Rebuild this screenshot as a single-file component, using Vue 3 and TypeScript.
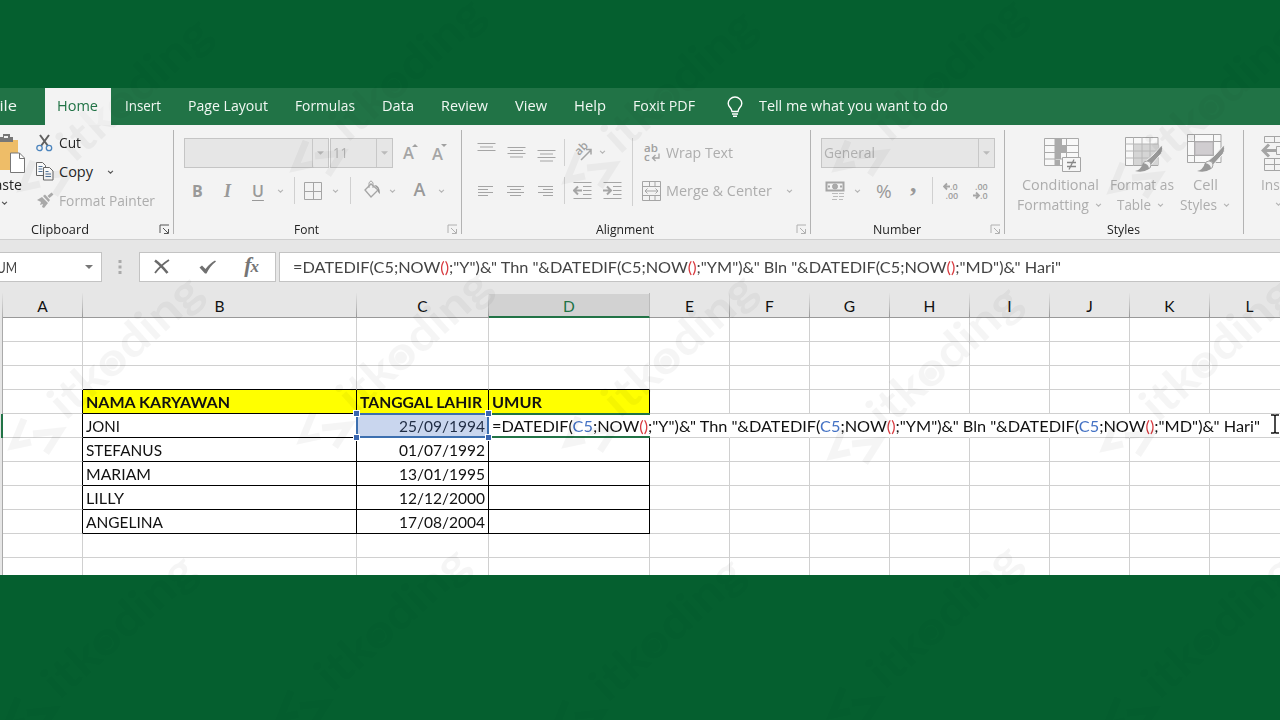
<script setup lang="ts">
import type { Directive } from 'vue'

// Condenses or stretches a label so that it fills the given width.
const vFit: Directive<HTMLElement, number> = {
  mounted(el, binding) {
    const natural = el.getBoundingClientRect().width
    el.style.transform = `scaleX(${binding.value / natural})`
    el.style.width = `${binding.value}px`
  },
}

const tabs = [
  { label: 'Insert', w: 36 },
  { label: 'Page Layout', w: 80 },
  { label: 'Formulas', w: 60 },
  { label: 'Data', w: 32 },
  { label: 'Review', w: 47 },
  { label: 'View', w: 32 },
  { label: 'Help', w: 32 },
  { label: 'Foxit PDF', w: 62 },
]

const columns = ['A', 'B', 'C', 'D', 'E', 'F', 'G', 'H', 'I', 'J', 'K', 'L']

interface Entry { text: string; w: number }
const table: Record<number, Record<string, Entry>> = {
  4: { B: { text: 'NAMA KARYAWAN', w: 144 }, C: { text: 'TANGGAL LAHIR', w: 122 }, D: { text: 'UMUR', w: 50 } },
  5: { B: { text: 'JONI', w: 34 }, C: { text: '25/09/1994', w: 86 } },
  6: { B: { text: 'STEFANUS', w: 76 }, C: { text: '01/07/1992', w: 86 } },
  7: { B: { text: 'MARIAM', w: 65 }, C: { text: '13/01/1995', w: 86 } },
  8: { B: { text: 'LILLY', w: 38 }, C: { text: '12/12/2000', w: 86 } },
  9: { B: { text: 'ANGELINA', w: 77 }, C: { text: '17/08/2004', w: 86 } },
}
const rows = [1, 2, 3, 4, 5, 6, 7, 8, 9, 10, 11]

const cellClass = (r: number, c: string) => ({
  ['c' + c]: true,
  head: r === 4 && 'BCD'.includes(c),
  lineRight: r >= 4 && r <= 9 && 'ABCD'.includes(c) && !(r === 5 && c === 'D'),
  lineBottom: r >= 3 && r <= 9 && 'BCD'.includes(c),
  spill: r === 5 && c > 'C',
})

const formula = [
  { t: '=DATEDIF(' }, { t: 'C5', k: 'ref' }, { t: ';NOW' }, { t: '()', k: 'par' },
  { t: ';"Y")&" Thn "&DATEDIF(' }, { t: 'C5', k: 'ref' }, { t: ';NOW' }, { t: '()', k: 'par' },
  { t: ';"YM")&" Bln "&DATEDIF(' }, { t: 'C5', k: 'ref' }, { t: ';NOW' }, { t: '()', k: 'par' },
  { t: ';"MD")&" Hari"' },
]

const marks = [
  [45, 178], [318, 158], [590, 170], [860, 158], [1135, 180],
  [36, 436], [325, 430], [590, 434], [855, 446], [1128, 438],
  [30, 715], [303, 708], [578, 718], [855, 705], [1130, 715],
]
</script>

<template>
  <div class="page">
    <div class="band top"></div>

    <nav class="menu">
      <div class="file"><span v-fit="26">File</span></div>
      <div class="home"><span v-fit="41">Home</span></div>
      <div class="tabs"><span v-for="t in tabs" :key="t.label" v-fit="t.w">{{ t.label }}</span></div>
      <svg class="bulb" width="18" height="22" viewBox="0 0 18 22" fill="none" stroke="#fff" stroke-width="1.4">
        <path d="M6 15.5C6 12 2.2 11 2.2 7.5a6.8 6.5 0 0 1 13.6 0C15.8 11 12 12 12 15.5Z" />
        <path d="M6 18h6M7 20.3h4" />
      </svg>
      <span v-fit="189">Tell me what you want to do</span>
    </nav>

    <div class="ribbon">
      <section class="group clip">
        <div class="body">
          <div class="paste">
            <svg width="26" height="40" viewBox="0 0 26 40">
              <path d="M0 7h18v30H0z" fill="#eebd68" />
              <path d="M0 4h3V1h7v3h3v5H0z" fill="#777" /><path d="M4 3h4v2H4z" fill="#f3f3f3" />
              <path d="M10.500 20h9l5 5v14.500h-14z" fill="#fff" stroke="#777" />
              <path d="M19.500 20v5.500h5" fill="none" stroke="#777" />
            </svg>
            <span class="pasteText"><span v-fit="36">Paste</span></span>
            <svg class="chev dark" viewBox="0 0 8 5"><path d="M1 1l3 3 3-3" /></svg>
          </div>
          <div class="clipRows">
            <div class="line">
              <svg width="18" height="18" viewBox="0 0 18 18" fill="none">
                <path d="M4 1l8 11M13 1L5 12" stroke="#606060" stroke-width="2" />
                <circle cx="3.500" cy="14" r="2.700" stroke="#4b84bd" stroke-width="1.300" /><circle cx="13" cy="14" r="2.700" stroke="#4b84bd" stroke-width="1.300" />
              </svg>
              <span v-fit="22">Cut</span>
            </div>
            <div class="line">
              <svg width="18" height="19" viewBox="0 0 18 19" fill="#fafafa" stroke="#666">
                <path d="M.5.5h6l3 3v10h-9z" /><path d="M2.500 4.500h4M2.500 7h4M2.500 9.500h4" stroke="#4f7196" />
                <path d="M7.500 5.500h6l3.500 3.500v9H7.500z" /><path d="M9.500 9.500h3M9.500 12h5.500M9.500 14.500h5.500" stroke="#4f7196" />
              </svg>
              <span v-fit="34">Copy</span>
              <svg class="chev dark wide" viewBox="0 0 8 5"><path d="M1 1l3 3 3-3" /></svg>
            </div>
            <div class="line off">
              <svg width="18" height="17" viewBox="0 0 18 17" fill="#a9a9a9">
                <path d="M1 8l5-3 6 6-4 5-2-1 1-3-3 1 1-3z" /><path d="M7 4l2-1.500 5 5.500-1.500 2z" /><path d="M11.500 4l4-3.500 2 2-4 3.500z" />
              </svg>
              <span v-fit="96">Format Painter</span>
            </div>
          </div>
        </div>
        <footer><b v-fit="58">Clipboard</b><svg class="launch dark" viewBox="0 0 11 10"><path d="M1 9V1h9M4 4l5 5M9.500 5v4.500H5" /></svg></footer>
      </section>

      <section class="group font">
        <div class="body">
          <div class="r1">
            <div class="combo"><i></i><svg class="tri" viewBox="0 0 8 4"><path d="M0 0h8L4 4z" /></svg></div>
            <div class="combo size"><i><span v-fit="15">11</span></i><svg class="tri" viewBox="0 0 8 4"><path d="M0 0h8L4 4z" /></svg></div>
            <span class="grow">A<svg viewBox="0 0 6 3"><path d="M0 3h6L3 0z" /></svg></span>
            <span class="grow shrink">A<svg viewBox="0 0 6 3"><path d="M0 0h6L3 3z" /></svg></span>
          </div>
          <div class="r2">
            <span class="bold">B</span><span class="ital">I</span><span class="under">U</span>
            <svg class="chev start" viewBox="0 0 8 5"><path d="M1 1l3 3 3-3" /></svg>
            <u></u>
            <svg width="18" height="18" viewBox="0 0 18 18" class="ln"><path d="M.5.5h17v17H.5zM.5 9.500h17M9.500.5v17" /></svg>
            <svg class="chev" viewBox="0 0 8 5"><path d="M1 1l3 3 3-3" /></svg>
            <u></u>
            <svg width="18" height="18" viewBox="0 0 18 18" class="ln bucket"><path d="M1 10l6-6 7 6-7 7z" stroke-width="1.300" /><path d="M5 8V3q2-4 4 0v5" /><path d="M10 5q6 0 6 9-3-2-2-5z" fill="#999" stroke="none" /></svg>
            <svg class="chev" viewBox="0 0 8 5"><path d="M1 1l3 3 3-3" /></svg>
            <span class="colorA">A</span>
            <svg class="chev" viewBox="0 0 8 5"><path d="M1 1l3 3 3-3" /></svg>
          </div>
        </div>
        <footer><b v-fit="25">Font</b><svg class="launch" viewBox="0 0 11 10"><path d="M1 9V1h9M4 4l5 5M9.500 5v4.500H5" /></svg></footer>
      </section>

      <section class="group align">
        <div class="body">
          <div class="alignLeft">
            <div class="a1">
              <svg width="19" height="25" viewBox="0 0 19 25" class="ln"><path d="M.5 3.500h18M3 7h13M.5 10.500h18" /></svg>
              <svg width="19" height="25" viewBox="0 0 19 25" class="ln"><path d="M.5 7.500h18M3 10.500h13M.5 13.500h18M3 17h13" /></svg>
              <svg width="19" height="25" viewBox="0 0 19 25" class="ln"><path d="M.5 10.500h18M3 14h13M.5 17.500h18M3 21h13" /></svg>
              <u></u>
              <svg width="20" height="18" viewBox="0 0 20 18" class="ln"><text x="0" y="0" transform="translate(6 13) rotate(-45)" class="ab">ab</text><path d="M8 17L18 7M13 6.500h5v5" stroke-width="1.500" /></svg>
              <svg class="chev" viewBox="0 0 8 5"><path d="M1 1l3 3 3-3" /></svg>
            </div>
            <div class="a2">
              <svg width="17" height="12" viewBox="0 0 17 12" class="ln"><path d="M1 1.500h15M1 4.500h10M1 7.500h15M1 10.500h10" /></svg>
              <svg width="17" height="12" viewBox="0 0 17 12" class="ln"><path d="M0 1.500h17M3 4.500h11M0 7.500h17M3 10.500h11" /></svg>
              <svg width="17" height="12" viewBox="0 0 17 12" class="ln"><path d="M1 1.500h15M6 4.500h10M1 7.500h15M6 10.500h10" /></svg>
              <u></u>
              <svg width="19" height="17" viewBox="0 0 19 17" class="ln"><path d="M.5.5h18M10 4.500h8.500M10 8.500h8.500M10 12.500h8.500M.5 16.500h18" /><path d="M9 8.500H1.500M5 4.500l-4 4 4 4" stroke-width="2" /></svg>
              <svg width="19" height="17" viewBox="0 0 19 17" class="ln"><path d="M.5.5h18M10 4.500h8.500M10 8.500h8.500M10 12.500h8.500M.5 16.500h18" /><path d="M0 8.500h7.500M4 4.500l4 4-4 4" stroke-width="2" /></svg>
            </div>
          </div>
          <u class="tall"></u>
          <div class="alignRight off">
            <div class="b1">
              <svg width="20" height="20" viewBox="0 0 20 20" class="ln"><text x="2" y="9" class="ab">ab</text><text x="2" y="18" class="ab">c</text><path d="M17 10.500v4.500h-6M13.500 12l-3 3 3 3" stroke-width="1.300" /></svg>
              <span v-fit="67">Wrap Text</span>
            </div>
            <div class="b2">
              <svg width="20" height="20" viewBox="0 0 20 20" class="ln"><path d="M.5.5h18v19H.5zM.5 5.500h18M.5 14.500h18M7.500.5v5M13 .5v5M7.500 14.500v5M13 14.500v5M3 10h13M5.500 7.500L3 10 5.500 12.500M13.500 7.500l2.500 2.500-2.500 2.500" /></svg>
              <span v-fit="106">Merge &amp; Center</span>
              <svg class="chev" viewBox="0 0 8 5"><path d="M1 1l3 3 3-3" /></svg>
            </div>
          </div>
        </div>
        <footer><b v-fit="58">Alignment</b><svg class="launch" viewBox="0 0 11 10"><path d="M1 9V1h9M4 4l5 5M9.500 5v4.500H5" /></svg></footer>
      </section>

      <section class="group number">
        <div class="body">
          <div class="r1"><div class="combo general"><i><span v-fit="51">General</span></i><svg class="tri" viewBox="0 0 8 4"><path d="M0 0h8L4 4z" /></svg></div></div>
          <div class="n2">
            <svg width="20" height="20" viewBox="0 0 20 20" class="ln"><path d="M1.500 1.500h17v8h-17z" stroke-width="2" /><circle cx="10" cy="5.500" r="2.500" fill="#aaa" /><path d="M3 5.500h2M15 5.500h2" stroke-width="2" /><path d="M7 12.500h6M14 12.500h5M8 15.500h5M14 15.500h5M7 18.500h5M14 18.500h4" stroke="#bbb" /></svg>
            <svg class="chev" viewBox="0 0 8 5"><path d="M1 1l3 3 3-3" /></svg>
            <span class="pct">%</span><span class="comma">,</span>
            <u></u>
            <svg width="18" height="18" viewBox="0 0 18 18" class="ln"><path d="M7 4.500H1M4 1.500l-3 3 3 3" stroke-width="1.800" /><text x="7" y="7.500" class="dec">.0</text><text x="2.500" y="17" class="dec">.00</text></svg>
            <svg width="18" height="18" viewBox="0 0 18 18" class="ln"><text x="2" y="7.500" class="dec">.00</text><path d="M0 13.500h6M3 10.500l3 3-3 3" stroke-width="1.800" /><text x="7" y="17" class="dec">.0</text></svg>
          </div>
        </div>
        <footer><b v-fit="48">Number</b><svg class="launch" viewBox="0 0 11 10"><path d="M1 9V1h9M4 4l5 5M9.500 5v4.500H5" /></svg></footer>
      </section>

      <section class="group styles off">
        <div class="body">
          <div class="big s1">
            <svg width="38" height="38" viewBox="0 0 38 38" class="ln">
              <path d="M.5 4.500h34v27H.5zM.5 11.500h34M.5 18.500h34M.5 25h34M11 4.500v27M22.500 4.500v27" fill="#f8f8f8" stroke="#aaa" />
              <path d="M11 5h7v6h-7zM11 12h11v6H11zM11 19h6v6h-6zM11 26h5v5h-5z" fill="#aaa" stroke="none" />
              <path d="M18.500 23.500h18v14h-18z" fill="#f6f6f6" /><path d="M23 28.500h9M23 32.500h9M30 25.500l-5 10" stroke-width="1.300" stroke="#888" />
            </svg>
            <span v-fit="77">Conditional</span>
            <p><span v-fit="72">Formatting</span><svg class="chev" viewBox="0 0 8 5"><path d="M1 1l3 3 3-3" /></svg></p>
          </div>
          <div class="big s2">
            <svg width="38" height="38" viewBox="0 0 38 38" class="ln">
              <path d="M.5 3.500h32.500v28H.5z" fill="#f8f8f8" /><path d="M9 10h24v21H9z" fill="#d5d5d5" stroke="none" />
              <path d="M.5 10h32.500M.5 17h32.500M.5 24h32.500M8.500 3.500v28M17 3.500v28M25 3.500v28" stroke="#b8b8b8" />
              <path d="M37 11q2 7-3 11l-8 9-5-4 7-6z" fill="#999" stroke="#f3f3f3" /><circle cx="22" cy="31" r="4" fill="#eee" /><path d="M10 37q6-1 8-8 6 1 6 6-6 4-14 2z" fill="#999" stroke="none" />
            </svg>
            <span v-fit="64">Format as</span>
            <p><span v-fit="34">Table</span><svg class="chev" viewBox="0 0 8 5"><path d="M1 1l3 3 3-3" /></svg></p>
          </div>
          <div class="big s3">
            <svg width="38" height="38" viewBox="0 0 38 38" class="ln">
              <path d="M.5.5h33.500v28H.5zM.5 7.500h33.500M.5 21.500h33.500M7.500.5v28M26.500.5v28" fill="#f8f8f8" /><path d="M8 8h18v13H8z" fill="#d0cdd0" stroke="#b8b5b8" />
              <path d="M37 11q2 7-3 11l-8 9-5-4 7-6z" fill="#999" stroke="#f3f3f3" /><circle cx="22" cy="31" r="4" fill="#eee" /><path d="M10 37q6-1 8-8 6 1 6 6-6 4-14 2z" fill="#999" stroke="none" />
            </svg>
            <span v-fit="25">Cell</span>
            <p><span v-fit="37">Styles</span><svg class="chev" viewBox="0 0 8 5"><path d="M1 1l3 3 3-3" /></svg></p>
          </div>
        </div>
        <footer><b v-fit="33">Styles</b></footer>
      </section>

      <section class="group cells off">
        <div class="body"><div class="big">
          <svg width="38" height="38" viewBox="0 0 38 38" class="ln"><path d="M3.500 2.500H38M3.500 2.500v6H38M13.500 2.500v6M24.500 2.500v6M3.500 24.500H38v12H3.500zM3.500 30.500H38M13.500 24.500v12M24.500 24.500v12" /><path d="M15.500 12.500H38v8H15.500z" /><path d="M15 16.500H2M8 10.500l-6 6 6 6" stroke-width="3" /></svg>
          <span v-fit="37">Insert</span>
          <svg class="chev" viewBox="0 0 8 5"><path d="M1 1l3 3 3-3" /></svg>
        </div></div>
      </section>
    </div>

    <div class="bar">
      <div class="name"><span v-fit="27">SUM</span><svg class="tri dark" viewBox="0 0 8 4"><path d="M0 0h8L4 4z" /></svg></div>
      <svg class="dots" width="4" height="14" viewBox="0 0 4 14" fill="#aaa"><path d="M.5 0h3v3h-3zM.5 5.500h3v3h-3zM.5 11h3v3h-3z" /></svg>
      <div class="actions">
        <svg width="18" height="16" viewBox="0 0 18 16" fill="none" stroke="#6a6a6a"><path d="M2 1.500Q8 6 14.500 14" stroke-width="2.600" /><path d="M16 1Q8 6 2 14" stroke-width="1.800" /></svg>
        <svg width="18" height="14" viewBox="0 0 18 14"><path d="M.5 7.500L3 5.500l3.500 3.500Q11 3 16 .5l1 1Q11 6 7.500 13.500H6z" fill="#707070" /></svg>
        <span class="fx">f<em>x</em></span>
      </div>
      <div class="input"><span v-fit="768"><template v-for="(p, i) in formula" :key="i"><span :class="{ par: p.k === 'par' }">{{ p.t }}</span></template></span></div>
    </div>

    <div class="sheet">
      <div class="row headers">
        <div class="gutter"></div>
        <div v-for="c in columns" :key="c" class="cell" :class="['c' + c, { active: c === 'D' }]">{{ c }}</div>
      </div>
      <div v-for="r in rows" :key="r" class="row">
        <div class="gutter" :class="{ on: r === 5 }"></div>
        <div v-for="c in columns" :key="c" class="cell" :class="cellClass(r, c)">
          <span v-if="table[r]?.[c]" v-fit="table[r][c].w">{{ table[r][c].text }}</span>
          <span v-else-if="r === 5 && c === 'D'" v-fit="768"><template v-for="(p, i) in formula" :key="i"><span :class="p.k">{{ p.t }}</span></template></span>
        </div>
      </div>
      <div class="editBox"></div>
      <div class="refBox"><i></i><i></i><i></i><i></i></div>
      <svg class="caret" width="10" height="20" viewBox="0 0 10 20" fill="none" stroke="#111" stroke-width="1.500"><path d="M1 1h3l1 1 1-1h3M5 2v16M1 19h3l1-1 1 1h3" /></svg>
    </div>

    <div class="band bottom"></div>

    <svg class="marks" width="1280" height="720" viewBox="0 0 1280 720">
      <g v-for="(m, i) in marks" :key="i" :transform="`translate(${m[0]} ${m[1]})`">
        <path d="M-12-17L-23 10L-5 6M-3-2L24-5L10 17" />
        <g transform="rotate(-42)">
          <text x="32" y="9" textLength="188" lengthAdjust="spacingAndGlyphs">itkoding</text>
          <circle cx="105" cy="-3" r="6" />
        </g>
      </g>
    </svg>
  </div>
</template>

<style>
html, body { margin: 0; overflow: hidden; }
</style>

<style scoped>
.page { position: relative; width: 1280px; height: 720px; overflow: hidden; background: #055f2f; font-family: "Open Sans", "Noto Sans", sans-serif; font-size: 14.500px; color: #262626; display: flex; flex-direction: column; }
.page span, .page b { white-space: pre; }
svg { flex: none; display: block; }
.menu > span, .tabs > span, .file span, .home span, .line span, footer b, .combo span, .b1 span, .b2 span, .big span, .name span, .input > span, .cell > span { display: inline-block; transform-origin: 0 50%; flex: none; }
.band { flex: none; height: 88px; }
.band.bottom { height: 145px; }
.menu { height: 37px; flex: none; display: flex; align-items: center; background: #217346; color: #f1f8f3; line-height: 35px; }
.menu > span, .tabs, .file { margin-top: -2px; }
.file { width: 45px; box-sizing: border-box; display: flex; }
.file span { margin-left: -9px; }
.home { width: 66px; height: 37px; box-sizing: border-box; padding-left: 12px; display: flex; background: #f3f3f3; color: #217346; }
.tabs { display: flex; gap: 27px; margin-left: 14px; margin-right: 31px; }
.bulb { margin-right: 15px; }

.ribbon { flex: none; height: 114px; display: flex; background: #f3f3f3; border-bottom: 1px solid #cfcfcf; }
.group { box-sizing: border-box; height: 114px; display: flex; flex-direction: column; position: relative; flex: none; }
.group::after { content: ""; position: absolute; right: 0; top: 5px; height: 104px; width: 1px; background: #b3b3b3; }
.body { height: 95px; display: flex; flex: none; }
footer { height: 19px; display: flex; justify-content: center; position: relative; line-height: 19px; font-size: 12.500px; color: #222; }
footer b { font-weight: 400; }
.launch { position: absolute; right: 4px; top: 4px; width: 11px; height: 10px; fill: none; stroke: #b0b0b0; }
.launch.dark { stroke: #555; }
.off { color: #adadad; }
.ln { fill: none; stroke: #a5a5a5; }
.chev { width: 7px; height: 4px; fill: none; stroke: #b5b5b5; stroke-width: 1.400; margin-right: 1px; }
.chev.dark { stroke: #555; }
.tri { width: 8px; height: 4px; fill: #bababa; }
.tri.dark { fill: #777; }
.ab { fill: #a0a0a0; stroke: none; font-weight: 600; font-size: 11.500px; }
.dec { fill: #9f9f9f; stroke: none; font-size: 9px; font-weight: 600; }
u { width: 1px; height: 27px; background: #d0d0d0; flex: none; }

.clip { width: 174px; }
.clip footer { padding-right: 54px; }
.paste { width: 36px; display: flex; flex-direction: column; padding-top: 8px; }
.pasteText { display: flex; margin: 1px 0 0 -14px; line-height: 22px; }
.pasteText span { display: inline-block; transform-origin: 0 50%; }
.paste .chev { margin: 5px 0 0 1px; }
.clipRows { padding-top: 3px; display: flex; flex-direction: column; }
.line { height: 29px; display: flex; align-items: center; gap: 5px; line-height: 28px; }
.wide { margin-left: 9px; }

.font { width: 288px; }
.font .body, .number .body { flex-direction: column; }
.font footer { padding-right: 24px; }
.r1 { height: 42px; margin: 13px 0 0 10px; display: flex; align-items: flex-start; }
.combo { box-sizing: border-box; width: 145px; height: 30px; border: 1px solid #c5c5c5; background: #e6e6e6; display: flex; align-items: center; color: #b0b0b0; }
.combo i { font-style: normal; flex: 1; height: 28px; line-height: 28px; border-right: 1px solid #c8c8c8; padding-left: 2px; }
.combo .tri { margin: 0 4px; width: 7px; }
.combo.size { width: 63px; margin-left: 1px; }
.combo.general { width: 174px; }
.grow { width: 18px; height: 30px; margin-left: 10px; line-height: 30px; font-size: 16.500px; font-weight: 600; color: #a5a5a5; display: flex; }
.grow.shrink { margin-left: 11px; line-height: 31px; }
.grow svg { width: 6px; height: 3px; fill: #a0a0a0; margin: 6px 0 0 -2px; }
.r2 { height: 27px; margin: -3px 0 0 18px; display: grid; grid-template-columns: 32px 28px 25px 17px 10px 18px 28px 14px 16px 26px 27px 18px; align-items: center; line-height: 26px; color: #999; font-size: 16px; }
.r2 .chev { justify-self: center; }
.r2 .chev.start { justify-self: start; }
.bucket { margin-top: -3px; }
.bold { font-weight: 700; }
.ital { font: italic 700 18px/26px "Liberation Serif", serif; }
.under { text-decoration: underline; text-underline-offset: 3px; font-weight: 600; }
.colorA { font-weight: 600; font-size: 18px; justify-self: center; margin-top: -4px; }

.align { width: 349px; }
.align footer { padding-right: 24px; }
.alignLeft { width: 170px; padding-top: 13px; box-sizing: border-box; }
.a1, .a2 { display: grid; grid-template-columns: 30px 30px 27px 9px 26px 8px; align-items: center; height: 28px; padding-left: 15px; }
.a2 { margin-top: 11px; height: 25px; grid-template-columns: 30px 30px 27px 9px 30px 19px; }
.tall { height: 68px; margin-top: 13px; }
.alignRight { padding: 13px 0 0 9px; }
.b1, .b2 { display: flex; align-items: center; gap: 4px; height: 29px; line-height: 28px; }
.b2 { margin-top: 9px; }
.b2 .chev { margin-left: 10px; }

.number { width: 194px; }
.number footer { padding-right: 22px; }
.n2 { height: 27px; margin: -3px 0 0 14px; display: grid; grid-template-columns: 29px 22px 34px 22px 11px 30px 18px; align-items: center; color: #999; }
.pct { font-size: 19px; line-height: 26px; }
.comma { font: 700 26px/20px "Liberation Serif", serif; margin-top: -14px; }

.styles { width: 239px; }
.styles footer { color: #222; padding-right: 3px; }
.styles .body { padding-left: 11px; }
.big { display: flex; flex-direction: column; align-items: center; padding-top: 9px; box-sizing: border-box; line-height: 20px; }
.big > span { margin-top: 3px; }
.big p { margin: 0; display: flex; align-items: center; gap: 6px; height: 20px; }
.s1 { width: 87px; }
.s2 { width: 74px; margin-left: 1px; }
.s1 > svg, .s2 > svg { margin-left: 6px; }
.s3 > svg { margin-left: 2px; }
.s1 > span, .s2 > span { margin-left: 1px; }
.s3 { width: 54px; }
.cells { width: 80px; margin-right: -44px; }
.cells .body { padding-left: 17px; }
.cells .big { align-items: flex-start; }
.cells .chev { margin: 7px 0 0 14px; }

.bar { flex: none; height: 53px; box-sizing: border-box; padding-top: 12px; background: #e6e6e6; display: flex; font-family: Lato, "Open Sans", sans-serif; font-size: 15.500px; color: #444; line-height: 28px; }
.bar > div { box-sizing: border-box; height: 30px; background: #fff; border: 1px solid #c3c3c3; display: flex; align-items: center; flex: none; }
.name { width: 102px; border-left: 0 !important; justify-content: space-between; padding-right: 8px; }
.name span { margin-left: -10px; }
.dots { margin: 8px 17px 0 16px; }
.actions { width: 137px; padding: 0 16px 0 13px; justify-content: space-between; }
.fx { font: italic 700 22px/26px "Liberation Serif", serif; color: #757575; margin-top: -3px; }
.fx em { font-size: 17px; margin-left: -1px; }
.input { width: 1010px; margin-left: 3px; padding-left: 13px; }
.par { color: #d83a3f; }
.ref { color: #4472c4; }

.sheet { flex: none; height: 282px; position: relative; overflow: hidden; background: #fff; font-family: Lato, "Open Sans", sans-serif; font-size: 15.500px; color: #111; }
.row { display: flex; height: 24px; width: 1320px; }
.gutter { width: 3px; box-sizing: border-box; border-right: 1px solid #aaa; background: #e6e6e6; flex: none; }
.gutter.on { border-right: 2px solid #217346; }
.cell { width: 80px; height: 24px; box-sizing: border-box; border-right: 1px solid #d0d0d0; border-bottom: 1px solid #d0d0d0; flex: none; line-height: 24px; padding: 0 3px; white-space: nowrap; }
.cB { width: 274px; }
.cC { width: 132px; text-align: right; }
.cD { width: 161px; }
.headers { height: 25px; background: #e6e6e6; }
.headers .gutter { border-image: linear-gradient(#e6e6e6, #aaa) 1; }
.headers .cell { height: 25px; text-align: center; border: solid; border-width: 0 1px 1px 0; border-image: linear-gradient(#e6e6e6, #bbb 60%, #999 96%) 1; line-height: 26px; font-size: 15.500px; padding: 0; }
.headers .active { background: linear-gradient(#e6e6e6 1px, #d2d2d2 1px); color: #217346; border-image: none; border-right-color: #bbb; border-bottom: 2px solid #217346; }
.head { background: #ff0; font-weight: 700; text-align: left; }
.lineRight { border-right-color: #000; }
.lineBottom { border-bottom-color: #000; }
.spill { border-right-color: transparent; overflow: visible; }
.spill > span { position: relative; }
.editBox { position: absolute; left: 488px; top: 120px; width: 162px; height: 25px; box-sizing: border-box; border: solid #217346; border-width: 2px 0 2px 1px; }
.refBox { position: absolute; left: 356px; top: 120px; width: 133px; height: 25px; box-sizing: border-box; border: 2px solid #3c6faf; background: rgba(68, 114, 196, .29); }
.refBox i { position: absolute; width: 5px; height: 5px; background: #3a66b0; outline: 1px solid #fff; }
.refBox i:nth-child(1) { left: -4px; top: -4px; }
.refBox i:nth-child(2) { right: -4px; top: -4px; }
.refBox i:nth-child(3) { left: -4px; bottom: -4px; }
.refBox i:nth-child(4) { right: -4px; bottom: -4px; }
.caret { position: absolute; left: 1270px; top: 121px; }

.marks { position: absolute; left: 0; top: 0; pointer-events: none; opacity: .036; mask-image: linear-gradient(rgba(0, 0, 0, .55) 125px, #000 125px, #000 575px, rgba(0, 0, 0, .55) 575px); }
.marks path { fill: none; stroke: #000; stroke-width: 7; }
.marks circle { fill: #000; }
.marks text { font: 700 46px Lato, sans-serif; }
</style>
